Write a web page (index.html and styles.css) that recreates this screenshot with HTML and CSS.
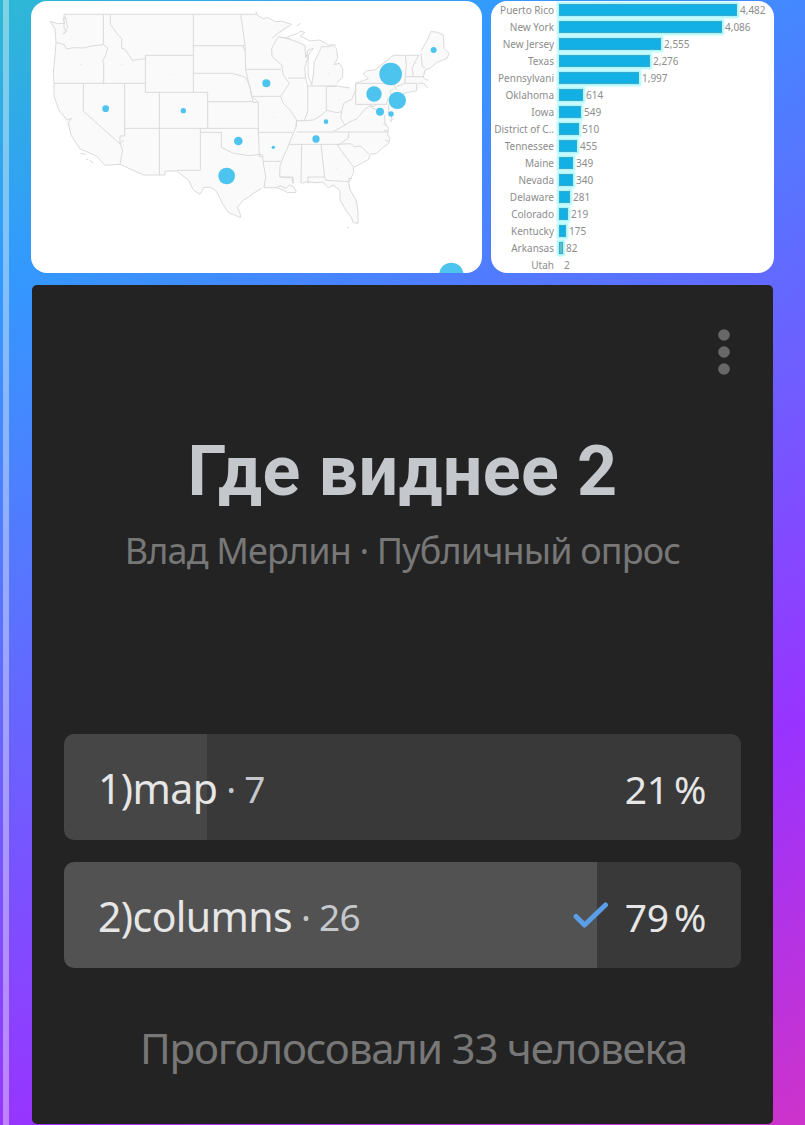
FILE: index.html
```html
<!DOCTYPE html>
<html lang="ru">
<head>
<meta charset="utf-8">
<title>Где виднее 2</title>
<link rel="stylesheet" href="styles.css">
</head>
<body>
<div class="page">
  <div class="media">
    <div class="tile">
      <svg class="map" viewBox="93 3 1353 816">
        <g class="land">
          <path d="M192 43H770L790 56L830 68L875 72L840 110L900 112L920 135L960 122L1010 148L1013 175L1002 194L1018 190L1028 205V232L1012 256L1050 264L1105 236L1090 215L1125 208L1160 180L1180 166H1257L1270 152L1292 95L1310 96L1330 105L1332 145L1347 160L1342 174L1310 188L1276 212L1270 232L1286 262L1215 276L1190 330L1172 370L1154 345L1170 410L1166 430L1110 463L1060 503L1046 548L1074 610L1074 670L1060 668L1020 600L1020 572L985 555L925 550L880 550L888 577L792 563L745 592L722 600L712 622L722 653L685 637L650 575L632 562H612L600 583L580 570L565 540L530 513H495V525H431L360 493L315 496L290 468L240 447L205 385L177 332L162 288L160 220L168 128L150 64L192 74Z"/>
          <path class="water" d="M917 258L913 205L925 160L945 142L958 155L945 180L940 225L930 256Z"/>
        </g>
        <g class="states">
          <path d="M150 64L175 71L195 70L188 58L196 50L203 82L190 102L200 94L192 84V43H770L768 35L773 46L790 56L803 53L825 65L845 64L875 73L840 95L815 115M150 64L165 85L168 128L192 133L200 147L220 143L250 144L275 138L310 134L323 144L317 166L308 183L311 190V250M168 128L165 165L160 220L162 250H436M310 43V134M331 43V73L350 100L365 115V145L375 148L397 181L436 176M580 43V277M436 166H580M436 166V277M436 277H623M250 250V333L360 432M374 250V408L360 408V432L372 420M374 385H775M478 277V525M623 277V385M601 385V511M601 397H664V442L700 460L748 467L780 463L790 467M601 511H530M162 250V288L177 332L190 345L200 360L215 355L205 368L213 405L240 447L262 456L290 468L315 496L360 493L368 450L360 432M360 493L431 525H495V513H530L565 540L580 570L600 583L612 562H632L650 575L668 612L685 637L722 653L720 640L712 622L730 600L745 592L760 580L784 565M242 460L258 463M268 480L280 490M259 477L264 479"/>
          <path d="M580 137H733M580 220H697L725 228L738 234L750 260L754 285L760 307H775M623 305H760M722 43L735 135L737 208H842M728 137L737 155M737 208L745 245L756 289H842M834 112L815 145L816 170L845 195L850 225L868 250L842 289L850 310L870 330L890 360L888 380L876 410L860 450L852 465L840 498L839 531H878L880 550M756 289L775 307V397H878M775 385L778 470H788L789 484H842M789 484L797 530L792 563"/>
          <path d="M835 110L860 115L890 125L915 137L917 172L926 162L914 205L917 234L923 258M865 234H917M923 258H1010M979 260V331M923 258V335L913 362L890 362L888 380M913 362L940 360L965 345L980 331L1010 338L1025 335L1031 310L1055 298L1067 270V250L1105 236M979 260L1010 258L1050 264M1067 250V313H1160L1163 297L1175 285L1170 275L1183 265M890 396H1160M868 433H1018L1045 414L1047 397M905 433L903 549M963 433L974 531H923L925 550M974 531L977 541L1048 545L1046 535L1056 536M1011 433L1022 450L1060 500M1012 433L1052 431L1064 440L1082 438L1106 462M1025 335L1022 355L1035 375L1050 365L1070 357L1093 330L1108 318L1122 320L1130 312M1001 394L1035 375M1111 314L1117 325L1130 329L1140 340M1166 313V340H1180M1216 166L1219 195L1214 250L1190 260M1216 230H1270M1240 230L1236 205L1247 182L1257 165M1263 160L1267 200L1275 204M1262 155L1282 120L1292 95L1310 96L1330 105L1332 145L1347 160L1342 174L1310 188L1290 205L1275 210L1270 232L1278 240H1286M1255 250H1270L1285 265M1214 250H1250V272L1210 280M1105 236L1090 222L1100 212L1125 210L1150 190L1180 166H1257M1067 250H1180L1190 270"/>
          <path d="M917 172L925 150L940 145L925 165L924 190L925 230L935 255M935 255L940 225L943 185L958 155L965 140L980 140L1000 137L1010 147L1013 175L1002 194L1018 190L1028 205V232L1010 248M862 110L895 100L900 94L915 97L900 108L930 123L960 120L985 135H1008M890 78L903 70M840 112L870 115M792 563H830L840 557L858 565L868 555L880 560L889 575M830 563L850 570L862 578L888 577M840 531L878 534V550M905 550L920 545L945 548L968 546L985 563L1000 555L1020 572L1020 600L1040 635L1053 650L1060 668L1074 670V635L1068 600L1050 570L1046 548L1060 520L1060 503L1106 478L1110 463L1130 460L1145 445L1166 430L1170 415L1162 403L1165 385L1155 370L1154 345M1150 370L1162 378M1151 390L1165 395M1155 420L1169 425M1175 350L1172 365L1182 355M1040 682L1047 684"/>
        </g>
        <g class="dots">
          <path d="M242 89v1M242 193v1M366 193v1M466 105v1M666 89v1M662 180v1M512 223v1M672 265v1M695 345v1M424 324v1M259 377v1M430 449v1M542 449v1M786 128v1M875 180v1M890 305v1M821 352v1M950 305v1M986 220v1M1018 298v1M1066 341v1M1081 425v1M1058 461v1M1009 505v1M942 492v1M877 473v1M829 543v1M1050 597v1M1118 363v1M1230 190v1M1247 190v1"/>
        </g>
        <g class="bubbles">
          <circle cx="317" cy="326" r="10"/><circle cx="550" cy="332" r="8"/><circle cx="715" cy="423" r="13"/><circle cx="680" cy="528" r="25"/>
          <circle cx="799" cy="250" r="12"/><circle cx="820" cy="442" r="5"/><circle cx="948" cy="417" r="11"/><circle cx="978" cy="365" r="7"/>
          <circle cx="1172" cy="222" r="34"/><circle cx="1122" cy="282" r="23"/><circle cx="1192" cy="301" r="26"/><circle cx="1140" cy="335" r="12"/>
          <circle cx="1173" cy="342" r="8"/><circle cx="1301" cy="150" r="9"/><circle cx="1354" cy="825" r="37"/>
        </g>
      </svg>
    </div>
    <div class="tile chart">
      <div class="row"><span class="name">Puerto Rico</span><i class="bar" style="width:178px"></i><span class="val">4,482</span></div>
      <div class="row"><span class="name">New York</span><i class="bar" style="width:163px"></i><span class="val">4,086</span></div>
      <div class="row"><span class="name">New Jersey</span><i class="bar" style="width:102px"></i><span class="val">2,555</span></div>
      <div class="row"><span class="name">Texas</span><i class="bar" style="width:91px"></i><span class="val">2,276</span></div>
      <div class="row"><span class="name">Pennsylvani</span><i class="bar" style="width:80px"></i><span class="val">1,997</span></div>
      <div class="row"><span class="name">Oklahoma</span><i class="bar" style="width:24px"></i><span class="val">614</span></div>
      <div class="row"><span class="name">Iowa</span><i class="bar" style="width:22px"></i><span class="val">549</span></div>
      <div class="row"><span class="name">District of C..</span><i class="bar" style="width:20px"></i><span class="val">510</span></div>
      <div class="row"><span class="name">Tennessee</span><i class="bar" style="width:18px"></i><span class="val">455</span></div>
      <div class="row"><span class="name">Maine</span><i class="bar" style="width:14px"></i><span class="val">349</span></div>
      <div class="row"><span class="name">Nevada</span><i class="bar" style="width:14px"></i><span class="val">340</span></div>
      <div class="row"><span class="name">Delaware</span><i class="bar" style="width:11px"></i><span class="val">281</span></div>
      <div class="row"><span class="name">Colorado</span><i class="bar" style="width:9px"></i><span class="val">219</span></div>
      <div class="row"><span class="name">Kentucky</span><i class="bar" style="width:7px"></i><span class="val">175</span></div>
      <div class="row"><span class="name">Arkansas</span><i class="bar faint" style="width:4px"></i><span class="val">82</span></div>
      <div class="row"><span class="name">Utah</span><i class="bar none" style="width:2px"></i><span class="val">2</span></div>
    </div>
  </div>
  <div class="poll">
    <svg class="more" viewBox="0 0 12 46"><circle cx="6" cy="6" r="5.8"/><circle cx="6" cy="23" r="5.8"/><circle cx="6" cy="40" r="5.8"/></svg>
    <h1 class="title">Где виднее 2</h1>
    <p class="meta">Влад Мерлин · Публичный опрос</p>
    <div class="options">
      <div class="option first">
        <span class="answer">1)map</span><span class="count">· 7</span>
        <span class="pct">21<span class="sign">%</span></span>
      </div>
      <div class="option second">
        <span class="answer">2)columns</span><span class="count">· 26</span>
        <svg class="check" viewBox="0 0 36 28"><path d="M3 15.500L11.500 24L32.500 4"/></svg>
        <span class="pct">79<span class="sign">%</span></span>
      </div>
    </div>
    <p class="total">Проголосовали 33 человека</p>
  </div>
</div>
</body>
</html>
```
FILE: styles.css
```css
* { box-sizing: border-box; margin: 0; padding: 0; }
body { width: 805px; height: 1125px; overflow: hidden; font-family: "Noto Sans", sans-serif; }
.page {
  width: 805px; height: 1125px; padding: 1px 31px 0; overflow: hidden;
  background:
    linear-gradient(rgba(255,255,255,.38), rgba(255,255,255,.38)) 3px 0 / 6px 100% no-repeat,
    linear-gradient(152deg, #2eb8d4 0%, #3399ff 18%, #6666ff 46.5%, #9933ff 74%, #cc33cc 99%);
}
.media { display: flex; gap: 9px; height: 272px; }
.tile { width: 451px; height: 272px; border-radius: 16px; background: #fff; overflow: hidden; }
.map { display: block; width: 451px; height: 272px; }
.land { fill: #fafafa; }
.water { fill: #fff; }
.states { fill: none; stroke: #dadada; stroke-width: 3; stroke-linejoin: round; }
.dots { stroke: #dcdcdc; stroke-width: 4; fill: none; }
.bubbles { fill: #4cc4ee; }
.chart { width: 283px; padding-top: 1px; font-size: 10px; color: #8d8d8d; }
.row { display: flex; align-items: center; height: 16.95px; white-space: nowrap; }
.name { display: flex; justify-content: flex-end; width: 63px; margin-right: 5px; }
.bar { height: 12px; background: #12b0e4; border: 1px solid #3ba9c8; box-shadow: 0 0 2px 2px #a4f6fb; }
.faint { background: #63bfca; }
.none { visibility: hidden; }
.val { margin-left: 3px; }
.poll {
  display: flex; flex-direction: column; width: 741px; height: 839px; margin: 12px 0 0 1px;
  padding: 44px 32px 0; border-radius: 5px; background: #232323; white-space: nowrap;
}
.more { align-self: flex-end; width: 12px; height: 46px; margin-right: 11px; fill: #686868; }
.title {
  align-self: center; height: 84px; margin-top: 54px;
  font: 700 70px/84px Roboto, sans-serif; letter-spacing: .4px; color: #c4c7cc;
}
.meta { align-self: center; height: 50px; margin-top: 13px; font-size: 36px; line-height: 50px; letter-spacing: -.86px; color: #777; }
.options { display: flex; flex-direction: column; gap: 22px; margin-top: 158px; }
.option { display: flex; align-items: center; height: 106px; padding: 2px 35px 0 34px; border-radius: 10px; background: #393939; color: #e6e6e6; font-size: 41px; }
.first { background: linear-gradient(90deg, #464646 143px, #393939 143px); }
.second { background: linear-gradient(90deg, #525252 533px, #393939 533px); }
.answer { letter-spacing: -.6px; }
.count { margin-left: 9px; color: #c4c7cc; font-size: 37px; letter-spacing: -.8px; }
.pct { margin-left: auto; font-size: 39px; letter-spacing: -.3px; }
.sign { margin-left: 5px; }
.check { width: 36px; height: 28px; margin: -3px 0 0 auto; fill: none; stroke: #5b9ee8; stroke-width: 5; stroke-linecap: round; stroke-linejoin: round; }
.check + .pct { margin-left: 16px; }
.total { align-self: center; height: 58px; margin: 51px 0 0 22px; font-size: 42px; line-height: 58px; letter-spacing: -1.15px; color: #777; }
```
